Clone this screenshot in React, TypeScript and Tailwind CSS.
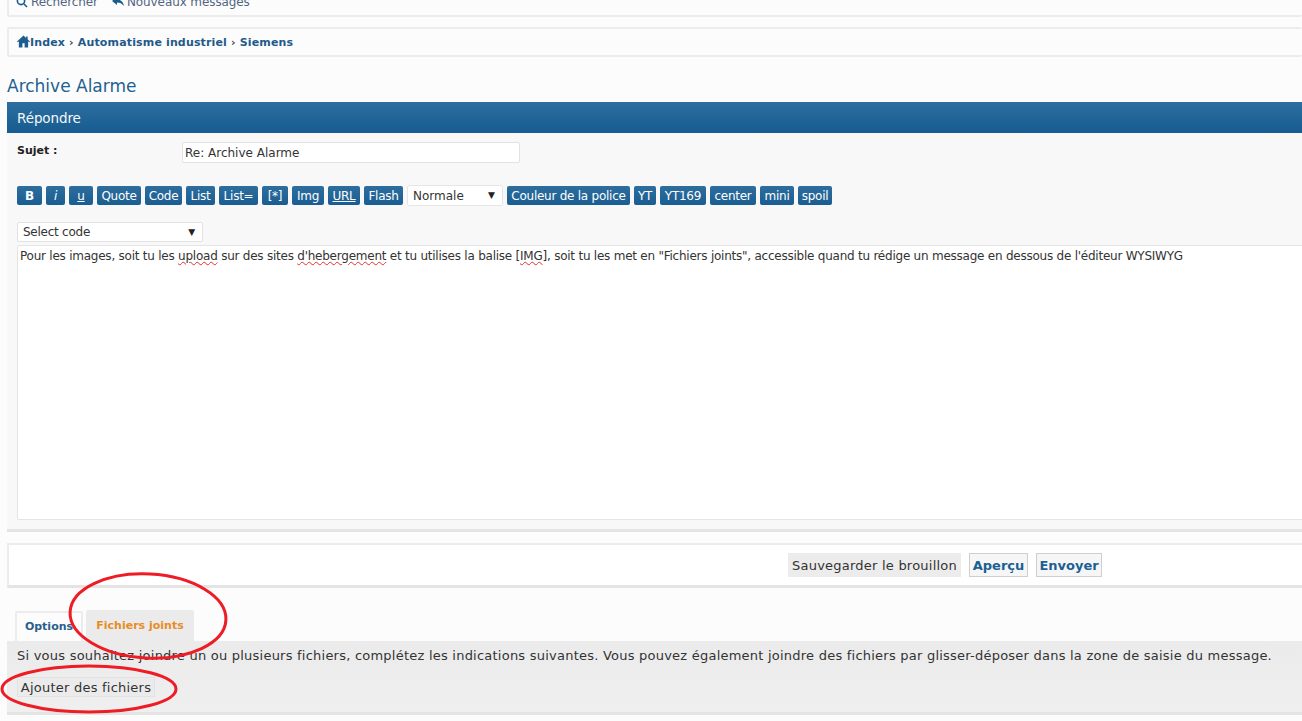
const font = 'font-["DejaVu_Sans",sans-serif]'

const buttons = [
  { label: 'B', cls: 'w-[25px] font-bold' },
  { label: 'i', cls: 'w-[19px] italic' },
  { label: 'u', cls: 'w-[24px] underline' },
  { label: 'Quote', cls: 'w-[44px]' },
  { label: 'Code', cls: 'w-[37px]' },
  { label: 'List', cls: 'w-[29px]' },
  { label: 'List=', cls: 'w-[39px]' },
  { label: '[*]', cls: 'w-[26px]' },
  { label: 'Img', cls: 'w-[32px]' },
  { label: 'URL', cls: 'w-[32px] underline' },
  { label: 'Flash', cls: 'w-[39px]' },
]

const buttons2 = [
  { label: 'Couleur de la police', cls: 'w-[123px]' },
  { label: 'YT', cls: 'w-[22px]' },
  { label: 'YT169', cls: 'w-[46px]' },
  { label: 'center', cls: 'w-[46px]' },
  { label: 'mini', cls: 'w-[34px]' },
  { label: 'spoil', cls: 'w-[34px]' },
]

function EditorButton({ label, cls }: { label: string; cls: string }) {
  return (
    <span className={`flex h-[19px] items-center justify-center rounded-[2px] bg-gradient-to-b from-[#2d6e9f] to-[#1a5d90] text-[12px] leading-none tracking-[-0.25px] text-white ${cls}`}>
      {label}
    </span>
  )
}

function Arrow() {
  return <span className="text-[9px] leading-none text-[#222]">▼</span>
}

function Squiggle({ children }: { children: string }) {
  return <span className="underline decoration-[#e03030] decoration-wavy decoration-[1px] underline-offset-1">{children}</span>
}

export default function App() {
  return (
    <div className={`relative h-[721px] w-[1302px] overflow-hidden bg-[#fcfcfc] text-[#333] ${font}`}>
      {/* top nav, cut by the window */}
      <div className="ml-[7px] mt-[-12px] flex h-[29px] items-center gap-[14px] rounded-[2px] border-2 border-r-0 border-[#ececec] bg-[#fcfcfc] pb-[2px] pl-[7px] text-[12px] tracking-[-0.1px] text-[#536482]">
        <span className="flex items-center gap-[3px]">
          <svg width="12" height="12" viewBox="0 0 12 12" fill="none" stroke="#1b5c8f" strokeWidth="1.6">
            <circle cx="5" cy="5" r="3.6" />
            <path d="M8 8l3 3" />
          </svg>
          Rechercher
        </span>
        <span className="flex items-center gap-[3px]">
          <svg width="12" height="10" viewBox="0 0 12 10" fill="#1b5c8f">
            <path d="M5 0L0 4l5 4V5.500c3 0 5 1 7 3.500-.6-4-3-6.500-7-6.500z" />
          </svg>
          Nouveaux messages
        </span>
      </div>

      {/* breadcrumb */}
      <div className="ml-[7px] mt-[10px] flex h-[30px] items-center rounded-[2px] border-2 border-r-0 border-[#ececec] bg-[#fcfcfc] pl-[8px] text-[11px] font-bold tracking-[0.15px] text-[#1f5a8a]">
        <svg width="13" height="13" viewBox="0 0 14 13" fill="#1c5d90" className="mt-[-1px]">
          <path d="M7 0L0 6.500l.8.8L2 6.300V13h3.800V8.500h2.400V13H12V6.300l1.200 1 .8-.8L11.500 4.200V1H9.800v1.600z" />
        </svg>
        <span className="mt-[2px]">Index</span>
        <span className="mx-[4px] mt-[2px] text-[#444]">›</span>
        <span className="mt-[2px]">Automatisme industriel</span>
        <span className="mx-[4px] mt-[2px] text-[#444]">›</span>
        <span className="mt-[2px]">Siemens</span>
      </div>

      <h2 className="ml-[7px] mt-[18px] h-[27px] text-[17px] leading-[23px] text-[#23618f]">Archive Alarme</h2>

      {/* reply panel */}
      <div className="ml-[7px] bg-[#f8f8f8]">
        <div className="flex h-[31px] items-center bg-gradient-to-b from-[#2d6e9f] to-[#155c90] pl-[10px] pt-[1px] text-[13.5px] tracking-[-0.1px] text-[#f4f8fb]">
          Répondre
        </div>
        <div className="h-[399px] border-b-[3px] border-[#e4e4e4] pl-[10px]">
          <div className="flex pt-[9px]">
            <span className="w-[165px] pt-[1px] text-[11px] font-bold leading-[16px] text-[#222]">Sujet :</span>
            <div className="flex h-[21px] w-[338px] items-center rounded-[2px] border border-[#e2e2e2] bg-white pl-[2px] text-[12px] text-[#333]">
              Re: Archive Alarme
            </div>
          </div>
          <div className="mt-[22px] flex items-center gap-[4px]">
            {buttons.map((b) => (
              <EditorButton key={b.label} label={b.label} cls={b.cls} />
            ))}
            <div className="flex h-[21px] w-[96px] items-center justify-between rounded-[2px] border border-[#e6e6e6] bg-white pl-[5px] pr-[7px] text-[12px]">
              Normale
              <Arrow />
            </div>
            {buttons2.map((b) => (
              <EditorButton key={b.label} label={b.label} cls={b.cls} />
            ))}
          </div>
          <div className="mt-[16px] flex h-[20px] w-[186px] items-center justify-between rounded-[2px] border border-[#e2e2e2] bg-white pl-[5px] pr-[7px] text-[12px] tracking-[-0.25px]">
            Select code
            <Arrow />
          </div>
          <div className="mt-[3px] h-[275px] rounded-l-[2px] border border-r-0 border-[#e4e4e4] bg-white pl-[2px] pt-[2px] text-[12px] leading-[17px] tracking-[-0.235px] whitespace-nowrap text-[#333]">
            Pour les images, soit tu les <Squiggle>upload</Squiggle> sur des sites <Squiggle>d'hebergement</Squiggle> et tu utilises la balise [<Squiggle>IMG</Squiggle>], soit tu les met en "Fichiers joints", accessible quand tu rédige un message en dessous de l'éditeur WYSIWYG
          </div>
        </div>
      </div>

      {/* submit buttons */}
      <div className="ml-[7px] mt-[11px] flex h-[45px] items-center border-2 border-r-0 border-b-[3px] border-[#ececec] border-b-[#e4e4e4] bg-white pl-[779px] text-[13px]">
        <span className="flex h-[24px] w-[173px] items-center justify-center bg-[#ececec] pt-[1px] tracking-[0.23px] text-[#333]">Sauvegarder le brouillon</span>
        <span className="ml-[8px] flex h-[24px] w-[59px] items-center justify-center border border-[#cfcfcf] bg-[#f6f6f6] pt-[1px] font-bold text-[#1c5f92]">Aperçu</span>
        <span className="ml-[8px] flex h-[24px] w-[66px] items-center justify-center border border-[#cfcfcf] bg-[#f6f6f6] pt-[1px] font-bold text-[#1c5f92]">Envoyer</span>
      </div>

      {/* tabs */}
      <div className="ml-[15px] mt-[22px] flex h-[31px] items-end gap-[3px] text-[11px] font-bold">
        <span className="flex h-[30px] w-[68px] items-center justify-center rounded-t-[2px] border-2 border-b-0 border-[#ececec] pt-[1px] text-[#2a5f8c]">Options</span>
        <span className="flex h-[31px] w-[108px] items-center justify-center rounded-t-[2px] bg-[#ebebeb] pt-[2px] text-[#e98c25]">Fichiers joints</span>
      </div>

      {/* attachments panel */}
      <div className="ml-[7px] h-[74px] border-b-[3px] border-[#e4e4e4] bg-gradient-to-b from-[#ebebeb] to-[#efefef] pl-[10px] pt-[6px] text-[13px] tracking-[0.23px] text-[#333]">
        <p className="whitespace-nowrap leading-[18px]">
          Si vous souhaitez joindre un ou plusieurs fichiers, complétez les indications suivantes. Vous pouvez également joindre des fichiers par glisser-déposer dans la zone de saisie du message.
        </p>
        <span className="mt-[12px] flex h-[20px] w-[138px] items-center justify-center border border-[#e2e2e2] bg-[#ebebeb] pt-[1px]">Ajouter des fichiers</span>
      </div>

      {/* red hand-drawn circles over the screenshot */}
      <svg className="absolute left-0 top-0" width="1302" height="721" fill="none" stroke="#ee1c25" strokeWidth="3">
        <ellipse cx="148" cy="616" rx="78" ry="42" transform="rotate(3 148 616)" />
        <ellipse cx="89" cy="689" rx="87" ry="23" />
      </svg>
    </div>
  )
}
